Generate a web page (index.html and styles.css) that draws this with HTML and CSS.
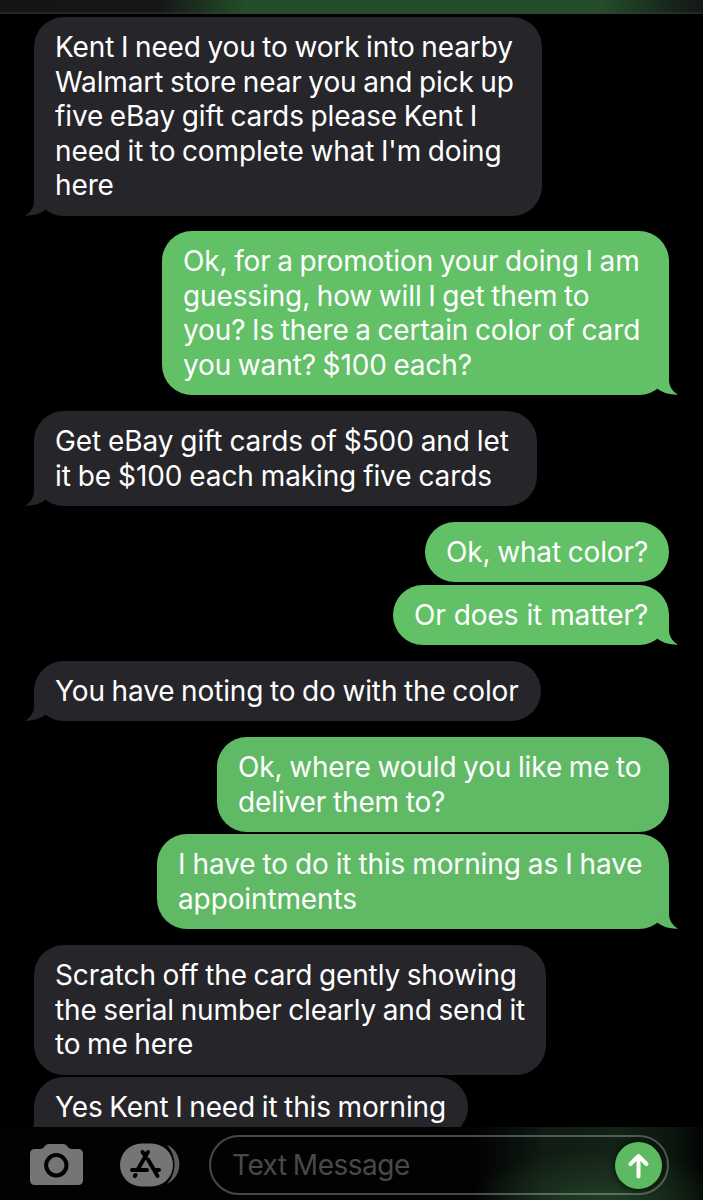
FILE: index.html
```html
<!DOCTYPE html>
<html lang="en">
<head>
    <meta charset="UTF-8">
    <meta name="viewport" content="width=device-width, initial-scale=1.0">
    <title>Messages</title>
    <link rel="stylesheet" href="styles.css">
</head>
<body>
    <!-- Shared bubble tail -->
    <svg class="defs" width="0" height="0">
        <symbol id="tail" viewBox="0 0 22 32">
            <path d="M9 0V17C9 23 6 28 0 31.7C8 32 15 30 20.7 25.8L22 0Z"></path>
        </symbol>
    </svg>

    <div class="header"></div>

    <div class="chat-messages">
        <div class="message received w-508">
            Kent I need you to work into nearby<br>Walmart store near you and pick up<br>five eBay gift cards please Kent I<br>need it to complete what I'm doing<br>here
            <svg class="tail"><use href="#tail"></use></svg>
        </div>
        <div class="message sent w-507">
            Ok, for a promotion your doing I am<br>guessing, how will I get them to<br>you? Is there a certain color of card<br>you want? $100 each?
            <svg class="tail"><use href="#tail"></use></svg>
        </div>
        <div class="message received loose w-503">
            Get eBay gift cards of $500 and let<br>it be $100 each making five cards
            <svg class="tail"><use href="#tail"></use></svg>
        </div>
        <div class="message sent w-244">Ok, what color?</div>
        <div class="message sent grouped looser w-276">
            Or does it matter?
            <svg class="tail"><use href="#tail"></use></svg>
        </div>
        <div class="message received w-507">
            You have noting to do with the color
            <svg class="tail"><use href="#tail"></use></svg>
        </div>
        <div class="message sent lower w-452">Ok, where would you like me to<br>deliver them to?</div>
        <div class="message sent lower grouped loose w-512">
            I have to do it this morning as I have<br>appointments
            <svg class="tail"><use href="#tail"></use></svg>
        </div>
        <div class="message received w-512">Scratch off the card gently showing<br>the serial number clearly and send it<br>to me here</div>
        <div class="message received grouped w-434">
            Yes Kent I need it this morning
            <svg class="tail"><use href="#tail"></use></svg>
        </div>
    </div>

    <div class="input-area">
        <svg class="camera" width="54" height="42" viewBox="0 0 54 42">
            <path fill="#757576" d="M5 5H10C15 5 14 0 19 0H33C38 0 37 5 42 5H48Q53 5 53 10V36Q53 41 48 41H5Q0 41 0 36V10Q0 5 5 5Z"></path>
            <circle cx="26.3" cy="21.3" r="10.2" fill="none" stroke="#000" stroke-width="4"></circle>
        </svg>
        <svg class="apps" width="60" height="44" viewBox="0 0 60 44">
            <path fill="#5d5d5e" d="M47 2C63 8 64 33 47 41C57 30 57 13 47 2Z"></path>
            <rect x="0" y="0.5" width="53" height="43" rx="21.5" fill="#757576"></rect>
            <g fill="none" stroke="#000" stroke-width="4" stroke-linecap="round">
                <path d="M22.5 9L25 12.5M28 9L18 26M12 27H27M34 27H39M28 16.5L37.5 33M15.5 32L14.8 33"></path>
            </g>
        </svg>
        <div class="text-field">
            <span class="placeholder">Text Message</span>
            <button class="send-button" aria-label="Send">
                <svg width="47" height="47" viewBox="0 0 47 47" fill="none" stroke="#fff" stroke-width="4" stroke-linecap="round" stroke-linejoin="round">
                    <path d="M23.5 34.5V14M15.5 22L23.5 14L31.5 22"></path>
                </svg>
            </button>
        </div>
    </div>
</body>
</html>
```

FILE: styles.css
```css
:root {
    --received-color: #26252a;
    --sent-color: #62c067;
}

* {
    margin: 0;
    padding: 0;
    box-sizing: border-box;
}

body {
    background-color: #000;
    color: #fff;
    font-family: Inter, "Liberation Sans", sans-serif;
    letter-spacing: -0.12px;
    word-spacing: -1.1px;
    display: flex;
    flex-direction: column;
    height: 1200px;
    overflow: hidden;
}

.defs {
    position: absolute;
}

.header {
    flex: none;
    height: 14px;
    border-bottom: 2px solid rgba(60, 60, 60, 0.4);
    background: linear-gradient(90deg, #141414 0, #151716 160px, #254d2a 245px, #254d2a 600px, #17231a 675px, #151716 703px);
}

.chat-messages {
    flex: 1;
    min-height: 0;
    overflow: hidden;
    display: flex;
    flex-direction: column;
    padding: 3px 34px 0;
}

.message {
    flex: none;
    position: relative;
    padding: 13px 0 13px 21px;
    border-radius: 30px;
    font-size: 28px;
    line-height: 34.5px;
    white-space: nowrap;
}

.message + .message {
    margin-top: 15.8px;
}

.message + .grouped {
    margin-top: 2.2px;
}

.received {
    align-self: flex-start;
    background-color: var(--received-color);
}

.sent {
    align-self: flex-end;
    background-color: var(--sent-color);
}

/* Sent bubbles get a little darker down the screen */
.lower {
    --sent-color: #60ba65;
}

.loose {
    word-spacing: -0.7px;
}

.looser {
    word-spacing: 0.3px;
}

.tail {
    position: absolute;
    bottom: 0;
    left: -9px;
    width: 22px;
    height: 32px;
    fill: var(--received-color);
}

.sent .tail {
    left: auto;
    right: -9px;
    transform: scaleX(-1);
    fill: var(--sent-color);
}

.w-244 { width: 244px; }
.w-276 { width: 276px; }
.w-434 { width: 434px; }
.w-452 { width: 452px; }
.w-503 { width: 503px; }
.w-507 { width: 507px; }
.w-508 { width: 508px; }
.w-512 { width: 512px; }

.input-area {
    flex: none;
    height: 73px;
    display: flex;
    align-items: center;
    padding: 3px 34px 0 30px;
    background:
        radial-gradient(ellipse 130px 60px at 600px 80px, rgba(38, 72, 42, 0.8), transparent),
        linear-gradient(90deg, #020202 0, #020202 475px, #0f1b13 545px, #132117 620px, #0b160f 670px, #030504 703px);
}

.camera {
    margin-right: 36px;
}

.apps {
    margin-right: 29px;
}

.text-field {
    flex: 1;
    height: 60px;
    display: flex;
    align-items: center;
    justify-content: space-between;
    padding: 0 5px 0 21px;
    border: 2px solid rgba(255, 255, 255, 0.28);
    border-radius: 30px;
}

.placeholder {
    color: #49494b;
    font-size: 28px;
    letter-spacing: -0.5px;
}

.send-button {
    width: 47px;
    height: 47px;
    border: none;
    border-radius: 50%;
    background-color: #5dba62;
    box-shadow: 0 0 5px 2px rgba(0, 20, 0, 0.7);
}

.send-button svg {
    display: block;
}
```
